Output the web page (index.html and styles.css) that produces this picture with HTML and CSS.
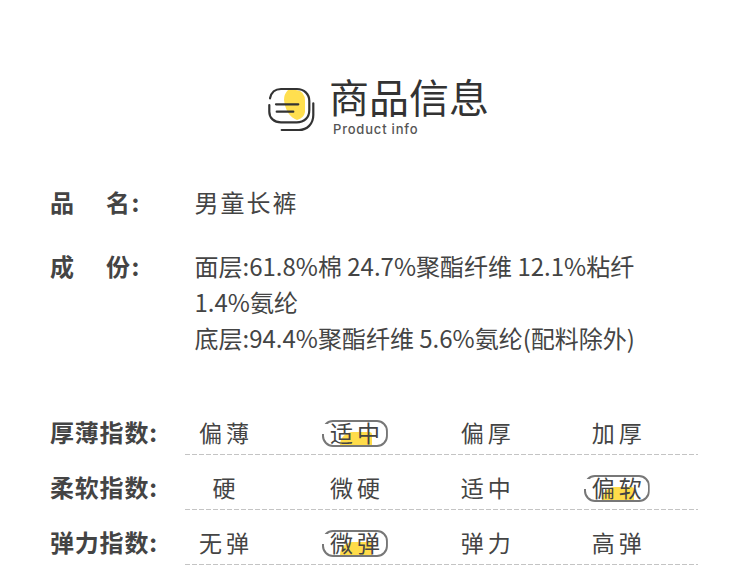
FILE: index.html
```html
<!DOCTYPE html>
<html lang="zh">
<head>
<meta charset="utf-8">
<title>商品信息</title>
<link rel="stylesheet" href="styles.css">
</head>
<body>
<div class="page">
  <header class="head">
    <svg class="logo" viewBox="0 0 50 50" width="50" height="50">
      <path class="logo-fill" d="M22 4H30Q39 5 39 15V26Q38 32 31 34Q20 30 18 14Q18 8 22 4Z"/>
      <path class="logo-line" d="M4 12.300Q6 3 15 3H31C38 3 43.300 8 43.300 15V24C43.300 32 38 36.300 30.700 36.300H15C8 36.300 3.300 32 3.300 25.700V19"/>
      <path class="logo-line" d="M47.300 17.300V29C47.300 38 41 44 33 44H15.700"/>
      <path class="logo-line" d="M10 18.300H32.300M10.700 25.700H27.300"/>
    </svg>
    <div class="head-text">
      <h1 class="title">商品信息</h1>
      <p class="subtitle">Product info</p>
    </div>
  </header>

  <section class="facts">
    <div class="fact">
      <div class="fact-label"><span>品</span><span>名:</span></div>
      <div class="fact-value name">男童长裤</div>
    </div>
    <div class="fact">
      <div class="fact-label"><span>成</span><span>份:</span></div>
      <div class="fact-value">面层:61.8%棉 24.7%聚酯纤维 12.1%粘纤<br>1.4%氨纶<br>底层:94.4%聚酯纤维 5.6%氨纶(配料除外)</div>
    </div>
  </section>

  <section class="scales">
    <div class="scale">
      <div class="scale-label">厚薄指数:</div>
      <div class="options">
        <span class="opt">偏薄</span>
        <span class="opt on">适中</span>
        <span class="opt">偏厚</span>
        <span class="opt">加厚</span>
      </div>
    </div>
    <div class="scale">
      <div class="scale-label">柔软指数:</div>
      <div class="options">
        <span class="opt">硬</span>
        <span class="opt">微硬</span>
        <span class="opt">适中</span>
        <span class="opt on">偏软</span>
      </div>
    </div>
    <div class="scale">
      <div class="scale-label">弹力指数:</div>
      <div class="options">
        <span class="opt">无弹</span>
        <span class="opt on">微弹</span>
        <span class="opt">弹力</span>
        <span class="opt">高弹</span>
      </div>
    </div>
  </section>
</div>
</body>
</html>
```
FILE: styles.css
```css
* { box-sizing: border-box; }
html, body { margin: 0; background: #fff; }
body {
  width: 750px;
  height: 570px;
  overflow: hidden;
  color: #444;
  font-family: "Noto Sans CJK SC", "Noto Sans", sans-serif;
}
.page { padding: 71px 0 0 50px; }

.head { display: flex; align-items: flex-start; margin-left: 216px; }
.logo { margin-top: 15px; flex: none; }
.logo-fill { fill: #ffdf4f; }
.logo-line { fill: none; stroke: #333; stroke-width: 2.200; stroke-linecap: round; }
.head-text { margin-left: 13px; }
.title { margin: 0; font-size: 40px; line-height: 50px; font-weight: 400; color: #333; white-space: nowrap; }
.subtitle { margin: 0 0 0 4px; font-family: Inter, sans-serif; font-size: 13px; line-height: 16px; font-weight: 500; color: #555; letter-spacing: 0.800px; }

.facts { margin-top: 47px; }
.fact { display: flex; margin-bottom: 28px; }
.fact-label { display: flex; width: 144.500px; font-size: 24px; line-height: 36px; font-weight: 700; gap: 30.500px; flex: none; letter-spacing: 1.500px; }
.fact-value { font-size: 24px; line-height: 36px; white-space: nowrap; }
.name { letter-spacing: 2px; }

.scales { margin-top: 44px; }
.scale { display: flex; height: 55px; }
.scale-label { width: 135px; font-size: 24px; line-height: 43px; font-weight: 700; flex: none; letter-spacing: 0.800px; padding-top: 10px; }
.options {
  display: grid;
  grid-template-columns: repeat(4, 78px);
  column-gap: 52.900px;
  width: 513px;
  height: 55px;
  align-content: start;
  padding-top: 10px;
  background: repeating-linear-gradient(90deg, #c4c4c4 0 5px, transparent 5px 7px) left bottom / 100% 1px no-repeat;
}
.opt {
  position: relative;
  text-align: center;
  font-size: 23px;
  line-height: 45px;
  letter-spacing: 4px;
  padding-left: 4px;
  white-space: nowrap;
  z-index: 0;
}
.on::before {
  content: "";
  position: absolute;
  z-index: -1;
  left: 24px;
  top: 22px;
  width: 32px;
  height: 13px;
  background: #ffdc4a;
  border-radius: 14px 3px 0 0;
}
.on::after {
  content: "";
  position: absolute;
  z-index: -1;
  left: 6px;
  top: 10px;
  width: 62px;
  height: 23px;
  border: 2px solid #777;
  border-radius: 11px;
  clip-path: polygon(0 0, 100% 0, 100% 100%, 0 100%, 0 52%, 6px 52%, 6px 15%, 0 15%);
}
```
